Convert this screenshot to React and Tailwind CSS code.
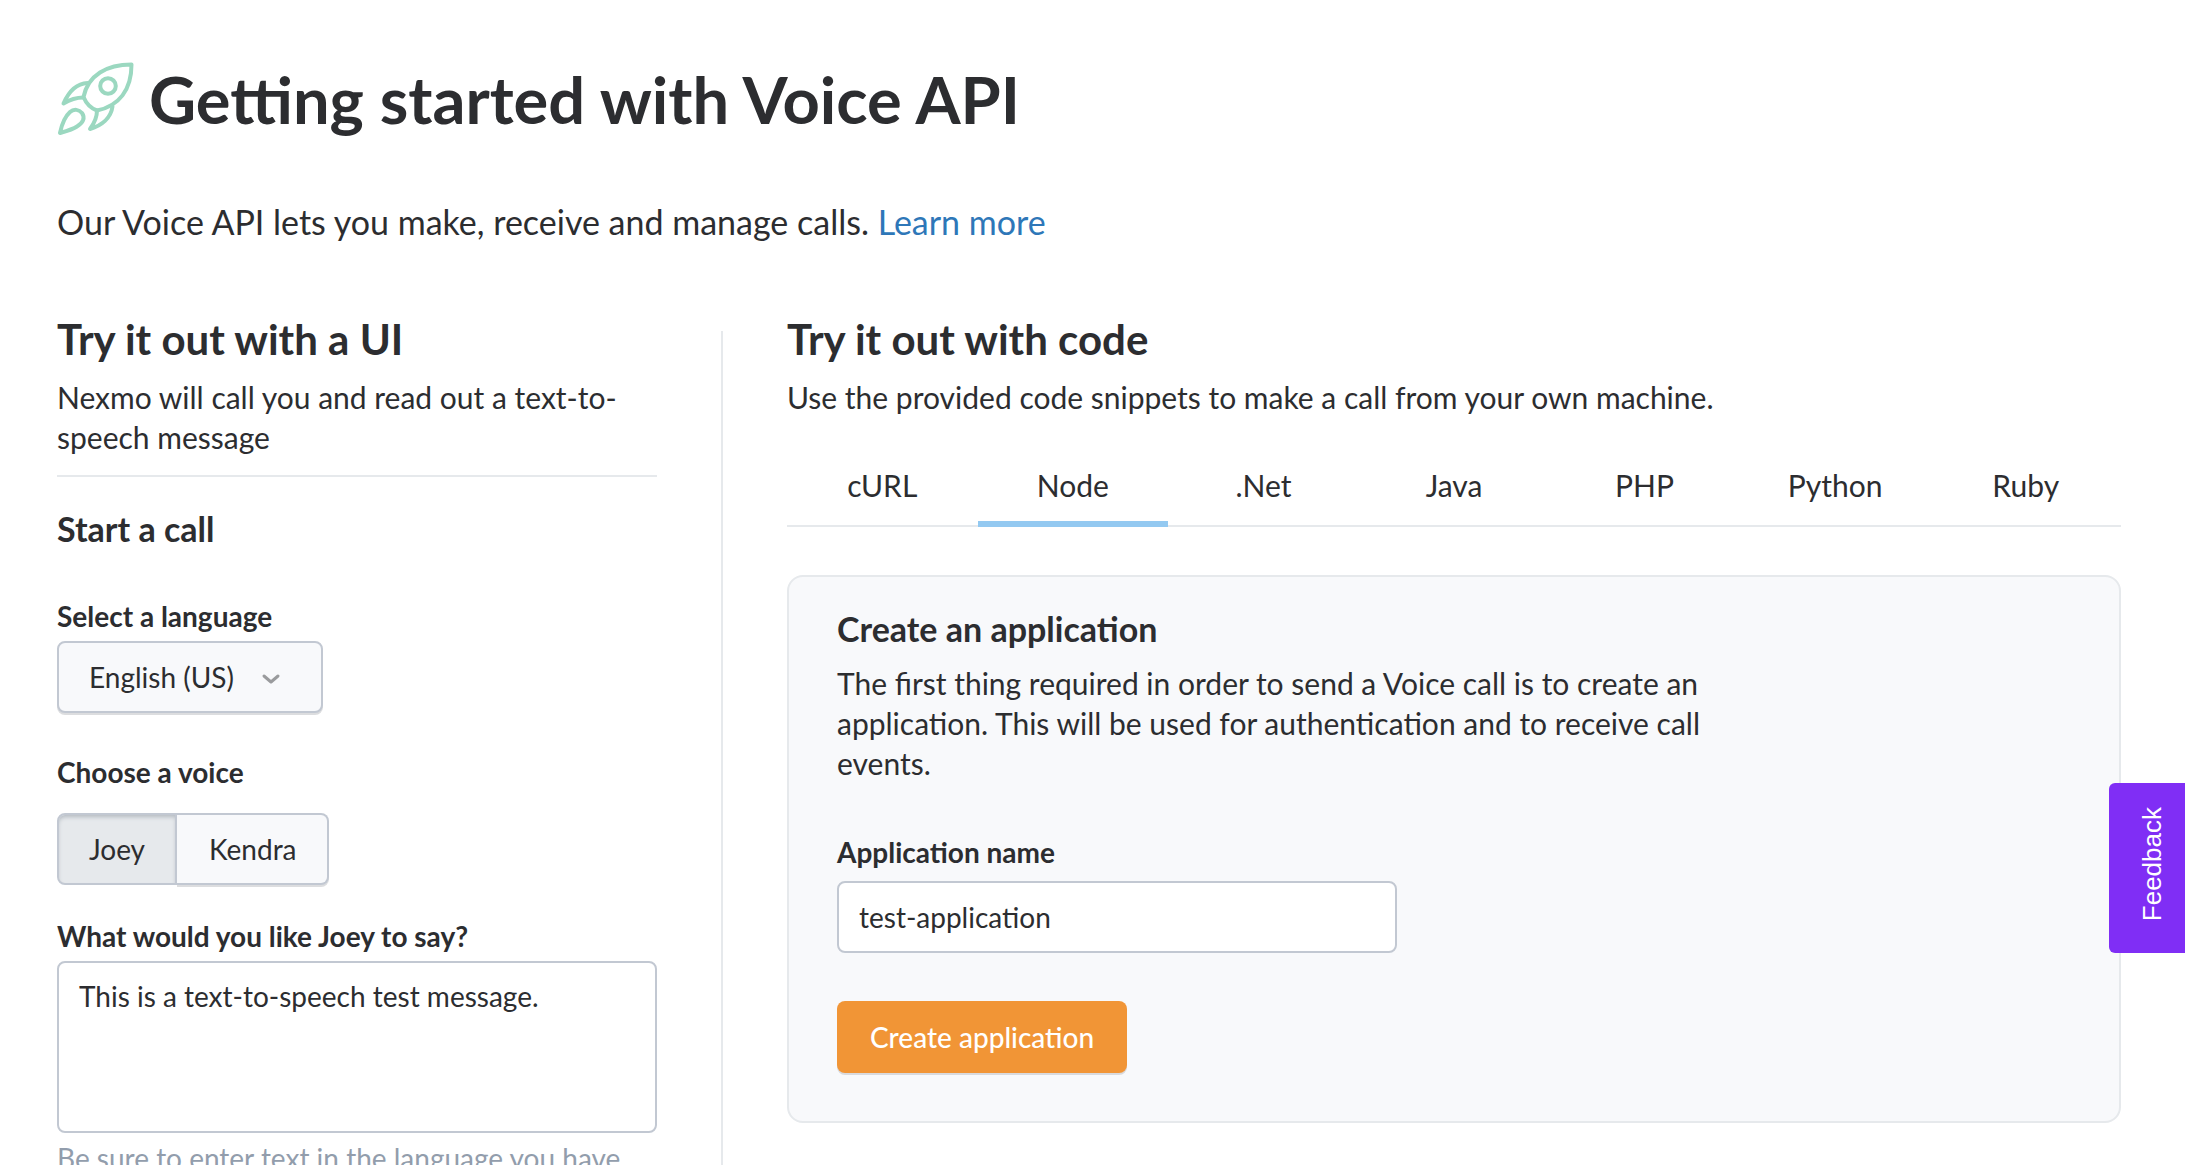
import { useState } from "react";

const TABS = ["cURL", "Node", ".Net", "Java", "PHP", "Python", "Ruby"];
const VOICES = ["Joey", "Kendra"];

function Rocket() {
  return (
    <svg
      className="mt-[2px] h-[76px] w-[78px] shrink-0"
      viewBox="0 0 78 76"
      fill="none"
      stroke="#9bd8c0"
      strokeWidth="4"
      strokeLinecap="round"
      strokeLinejoin="round"
      aria-hidden="true"
    >
      <path d="M74.500 4.500 C50 4.500 31 15 26.500 37 C29 43 33 48 40 50.500 C62 46 74.500 30 74.500 4.500 Z" />
      <circle cx="51" cy="26" r="7.800" />
      <path d="M30.500 23 C19 23.500 12 31 6.500 43.500 C13 39.500 19 37.500 26.500 37.500" />
      <path d="M40 50.500 C40 57 37.500 63 33 69 C44.500 65.500 54 58 55.500 46.500" />
      <path d="M3 73 C5 63 8 56.500 13 52 C17 48.500 22 49.500 25 53 C28.500 58 26 63 20 66.500 C15.500 69.500 10 71 3 73 Z" />
    </svg>
  );
}

export default function App() {
  const [tab, setTab] = useState("Node");
  const [voice, setVoice] = useState("Joey");

  return (
    <div className="min-h-screen bg-white pt-[58px] pr-16 pl-[57px] font-['Lato',sans-serif] text-[#2c2d30]">
      <header>
        <div className="flex items-start gap-[14px]">
          <Rocket />
          <h1 className="text-[65px] leading-[82px] font-bold">Getting started with Voice API</h1>
        </div>
        <p className="mt-[58px] text-[34px] leading-[48px]">
          Our Voice API lets you make, receive and manage calls.{" "}
          <a href="#learn" className="text-[#2e77b8]">Learn more</a>
        </p>
      </header>

      <main className="mt-[69px] flex">
        <section className="w-[600px] shrink-0">
          <h2 className="text-[42px] leading-[48px] font-bold">Try it out with a UI</h2>
          <p className="mt-[14px] border-b-2 border-[#e6e9ec] pb-[18px] text-[30px] leading-[40px]">
            Nexmo will call you and read out a text-to-speech message
          </p>
          <h3 className="mt-8 text-[34px] leading-[40px] font-bold">Start a call</h3>

          <label htmlFor="language" className="mt-[47px] block text-[28px] leading-[40px] font-bold">
            Select a language
          </label>
          <div className="relative mt-[5px] w-[266px]">
            <select
              id="language"
              className="block h-[72px] w-full appearance-none rounded-lg border-2 border-[#c2c8d2] bg-[#f8f9fb] px-[30px] text-[28px] shadow-[0_2px_0_#dcdddf]"
            >
              <option>English (US)</option>
            </select>
            <svg
              className="pointer-events-none absolute top-[32px] right-[42px] h-[12px] w-[20px]"
              viewBox="0 0 20 12"
              fill="none"
              stroke="#9a9b9d"
              strokeWidth="3"
              strokeLinecap="round"
              strokeLinejoin="round"
              aria-hidden="true"
            >
              <path d="M3 3 L10 9 L17 3" />
            </svg>
          </div>

          <fieldset className="mt-[39px]">
            <legend className="text-[28px] leading-[40px] font-bold">Choose a voice</legend>
            <div className="mt-[21px] flex">
              {VOICES.map((name) => (
                <label
                  key={name}
                  className="flex h-[72px] cursor-pointer items-center border-2 border-[#c2c8d2] bg-[#f8f9fb] px-[30px] text-[28px] shadow-[0_2px_0_#dcdddf] first:rounded-l-lg last:rounded-r-lg last:border-l-0 last:pl-8 has-checked:bg-[#e6e9ec] has-checked:shadow-[inset_0_3px_4px_-1px_#b4bac1]"
                >
                  <input
                    type="radio"
                    name="voice"
                    value={name}
                    checked={voice === name}
                    onChange={() => setVoice(name)}
                    className="sr-only"
                  />
                  {name}
                </label>
              ))}
            </div>
          </fieldset>

          <label htmlFor="message" className="mt-[31px] block text-[28px] leading-[40px] font-bold">
            What would you like {voice} to say?
          </label>
          <textarea
            id="message"
            defaultValue="This is a text-to-speech test message."
            className="mt-[5px] block h-[172px] w-full resize-none rounded-lg border-2 border-[#c2c8d2] bg-white px-5 py-[13px] text-[28px] leading-[40px]"
          />
          <p className="mt-[5px] text-[28px] leading-[40px] whitespace-nowrap text-[#929dac]">
            Be sure to enter text in the language you have
          </p>
        </section>

        <div className="mx-16 mt-4 w-[2px] shrink-0 bg-[#e6e9ec]" />

        <section className="min-w-0 flex-1">
          <h2 className="text-[42px] leading-[48px] font-bold">Try it out with code</h2>
          <p className="mt-[14px] text-[30px] leading-[40px]">
            Use the provided code snippets to make a call from your own machine.
          </p>

          <div role="tablist" className="mt-8 grid grid-cols-7 shadow-[inset_0_-2px_0_#e6e9ec]">
            {TABS.map((name) => (
              <button
                key={name}
                type="button"
                role="tab"
                aria-selected={tab === name}
                onClick={() => setTab(name)}
                className="border-b-[6px] border-transparent py-4 text-[30px] leading-[40px] aria-selected:border-[#93c9f1]"
              >
                {name}
              </button>
            ))}
          </div>

          <div className="mt-12 rounded-2xl border-2 border-[#e6e9ec] bg-[#f8f9fb] px-12 pt-8 pb-12">
            <h3 className="text-[34px] leading-[40px] font-bold">Create an application</h3>
            <p className="mt-[14px] max-w-[880px] text-[30px] leading-[40px]">
              The first thing required in order to send a Voice call is to create an application. This will be
              used for authentication and to receive call events.
            </p>
            <label htmlFor="app-name" className="mt-[49px] block text-[28px] leading-[40px] font-bold">
              Application name
            </label>
            <input
              id="app-name"
              type="text"
              defaultValue="test-application"
              className="mt-[9px] block h-[72px] w-full max-w-[560px] rounded-lg border-2 border-[#c2c8d2] bg-white px-5 text-[28px]"
            />
            <button
              type="button"
              className="mt-12 block h-[72px] rounded-lg bg-[#f19536] px-[33px] text-[28px] font-medium text-white shadow-[0_2px_0_#d9dadd]"
            >
              Create application
            </button>
          </div>
        </section>
      </main>

      <button
        type="button"
        className="fixed top-[783px] right-0 z-20 flex h-[170px] w-[76px] items-center justify-center rounded-l-md bg-[#802ef5] pb-2 pl-[10px] font-['Liberation_Sans',Arial,sans-serif] text-[26px] text-white"
      >
        <span className="rotate-180 [writing-mode:vertical-rl]">Feedback</span>
      </button>
    </div>
  );
}
